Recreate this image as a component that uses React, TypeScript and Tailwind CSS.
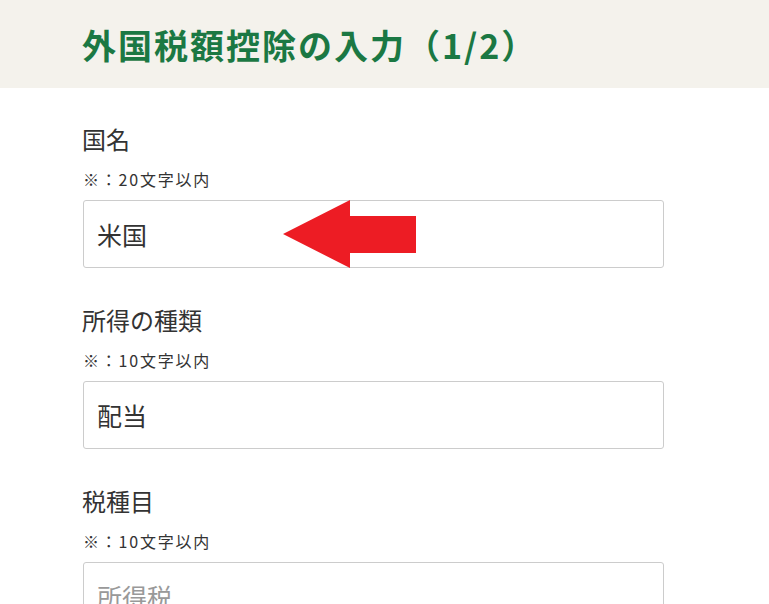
import { ReactNode } from "react";

interface Field {
  label: string;
  note: string;
  value?: string;
  placeholder?: string;
  marker?: boolean;
}

const fields: Field[] = [
  { label: "国名", note: "※：20文字以内", value: "米国", marker: true },
  { label: "所得の種類", note: "※：10文字以内", value: "配当" },
  { label: "税種目", note: "※：10文字以内", placeholder: "所得税" },
];

const font = "font-['Meiryo','Noto_Sans_CJK_JP',sans-serif]";

function Arrow() {
  return (
    <svg
      className="pointer-events-none absolute left-[199px] top-0"
      width="136"
      height="70"
      viewBox="0 0 136 70"
    >
      <path d="M1 34 L68 0 L68 16 L134 16 L134 53 L68 53 L68 68 Z" fill="#ed1c24" />
    </svg>
  );
}

function FormField({ field, children }: { field: Field; children?: ReactNode }) {
  return (
    <div className="flex flex-col">
      <label className="-ml-px text-[24px] leading-[30px] text-[#333]">{field.label}</label>
      <p className="mt-[14px] text-[16px] leading-[22px] tracking-[1.8px] text-[#333]">{field.note}</p>
      <div className="relative mt-[10px]">
        <input
          readOnly
          value={field.value ?? ""}
          placeholder={field.placeholder}
          className={`h-[68px] w-[581px] rounded-[3px] border border-[#cccccc] bg-white px-[13px] text-[25px] text-[#333] placeholder:text-[#999] outline-none ${font}`}
        />
        {children}
      </div>
    </div>
  );
}

export default function App() {
  return (
    <div className={`min-h-screen bg-white ${font}`}>
      <header className="flex h-[88px] items-center bg-[#f4f2ec] pl-[82px]">
        <h1 className="text-[34px] font-bold tracking-[2px] text-[#1b7843]">外国税額控除の入力（1/2）</h1>
      </header>
      <main className="flex flex-col gap-[37px] pl-[83px] pt-[36px]">
        {fields.map((field) => (
          <FormField key={field.label} field={field}>
            {field.marker && <Arrow />}
          </FormField>
        ))}
      </main>
    </div>
  );
}
